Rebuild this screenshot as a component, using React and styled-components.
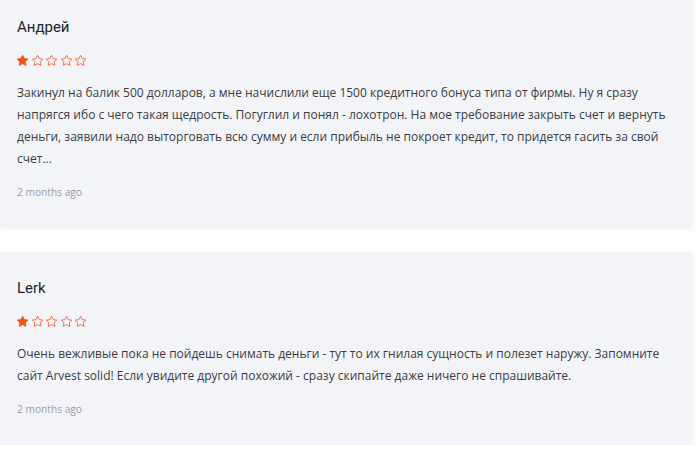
import React from "react";
import styled, { createGlobalStyle } from "styled-components";

const Global = createGlobalStyle`
  html, body { margin: 0; padding: 0; background: #ffffff; }
  body { font-family: "Open Sans", sans-serif; overflow: hidden; }
`;

const List = styled.div`
  display: flex;
  flex-direction: column;
  gap: 24px;
  width: 692px;
  margin-top: -9px;
`;

const Card = styled.article`
  background: #f3f4f8;
  box-shadow: 1px 2px 5px rgba(0, 0, 0, 0.05);
  padding: 24px 17px 28px;
`;

const Name = styled.div`
  font-family: Roboto, "Liberation Sans", sans-serif;
  font-size: 15px;
  line-height: 24px;
  color: #222428;
`;

const Stars = styled.div`
  display: flex;
  gap: 1.4px;
  margin: 15px 0 0 -1px;
  height: 14px;
  align-items: center;
`;

const Text = styled.p`
  margin: 14px 0 0;
  font-family: "Open Sans", sans-serif;
  font-size: 12px;
  line-height: 22px;
  color: #3a3c41;
`;

const Time = styled.div`
  margin-top: 14px;
  font-family: "Open Sans", sans-serif;
  font-size: 10.2px;
  line-height: 16px;
  color: #9a9ca3;
`;

const STAR =
  "M12 2.2l3 6.2 6.8.9-5 4.7 1.3 6.8L12 17.5l-6.1 3.3 1.3-6.8-5-4.7 6.8-.9z";

function Star({ filled }) {
  return (
    <svg width="13.2" height="13.2" viewBox="0 0 24 24">
      <path
        d={STAR}
        fill={filled ? "#f4511e" : "none"}
        stroke={filled ? "#f4511e" : "#f26a45"}
        strokeWidth={filled ? 1.6 : 1.7}
        strokeLinejoin="round"
      />
    </svg>
  );
}

function Rating({ value }) {
  return (
    <Stars>
      {[1, 2, 3, 4, 5].map((i) => (
        <Star key={i} filled={i <= value} />
      ))}
    </Stars>
  );
}

const reviews = [
  {
    name: "Андрей",
    rating: 1,
    text:
      "Закинул на балик 500 долларов, а мне начислили еще 1500 кредитного бонуса типа от фирмы. Ну я сразу напрягся ибо с чего такая щедрость. Погуглил и понял - лохотрон. На мое требование закрыть счет и вернуть деньги, заявили надо выторговать всю сумму и если прибыль не покроет кредит, то придется гасить за свой счет...",
    time: "2 months ago",
  },
  {
    name: "Lerk",
    rating: 1,
    text:
      "Очень вежливые пока не пойдешь снимать деньги - тут то их гнилая сущность и полезет наружу. Запомните сайт Arvest solid! Если увидите другой похожий - сразу скипайте даже ничего не спрашивайте.",
    time: "2 months ago",
  },
];

export default function App() {
  return (
    <>
      <Global />
      <List>
        {reviews.map((r) => (
          <Card key={r.name}>
            <Name>{r.name}</Name>
            <Rating value={r.rating} />
            <Text>{r.text}</Text>
            <Time>{r.time}</Time>
          </Card>
        ))}
      </List>
    </>
  );
}
